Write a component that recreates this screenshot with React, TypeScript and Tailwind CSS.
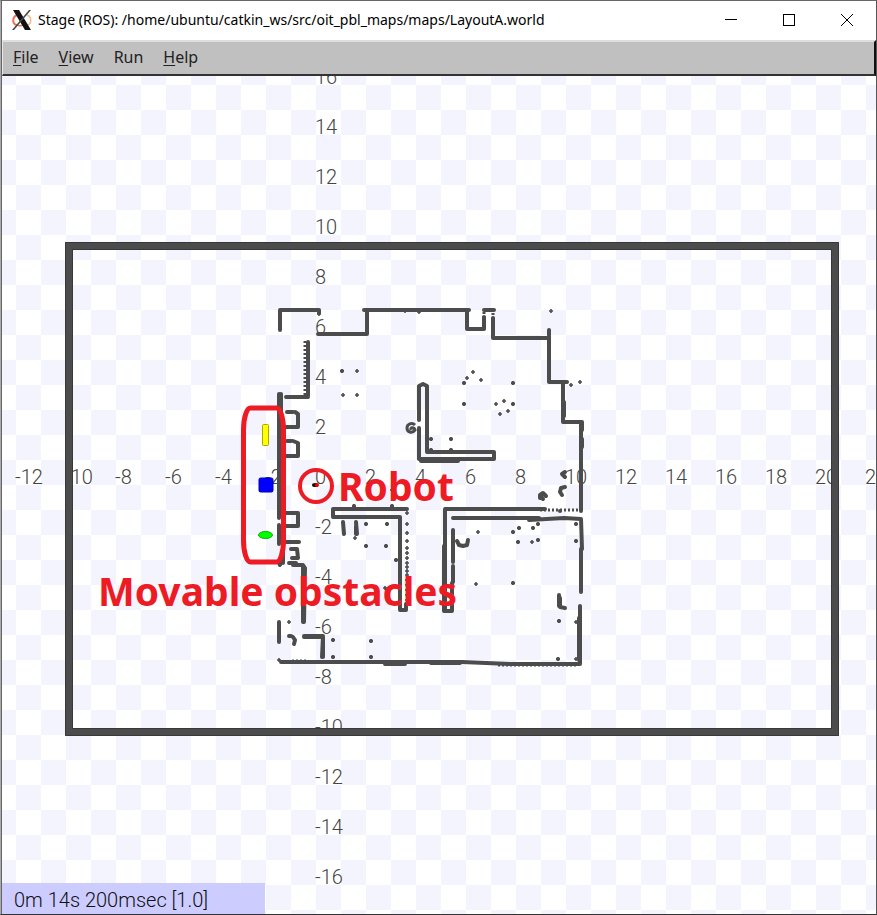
const WALL = '#4c4c4c';
const RED = '#ed1c24';

const xTicks = [-12, -10, -8, -6, -4, -2, 0, 2, 4, 6, 8, 10, 12, 14, 16, 18, 20, 22];
const yTicks = [16, 14, 12, 10, 8, 6, 4, 2, -2, -4, -6, -8, -10, -12, -14, -16];

const walls = [
  'M280 330V310H319V313',
  'M318 334H367V311',
  'M364 310H469',
  'M308 396V342M308 397H286',
  'M279 394V518M279 525V544',
  'M281 394V420',
  'M287 412H293M295 412L298 414V427H284',
  'M287 441H291M293 441L298 443V456H284',
  'M284 513H298V526H284',
  'M284 542H299',
  'M291 549L297 549L298 558H292',
  'M283 548V563M279 563L280 565',
  'M289 563H296M293 565H303L305 568L304 622M303 566V622',
  'M279 622V642',
  'M289 636L291 636M293 637L295 640L294 644',
  'M304 636H323L322 657M304 637H323V657',
  'M281 662H462L510 664H580V606',
  'M385 664H405M431 663H460',
  'M407 509H333V517H400V610H406V604',
  'M343 522L344 534M356 522L357 534M356 526V534',
  'M467 310V329H484V317',
  'M484 310H494',
  'M493 318V338H549',
  'M549 330V382H567',
  'M563 383V397M564 402V416M563 383V422H581V511',
  'M582 422V430M582 439V447',
  'M419 420V386L423 384L427 386V452H494V459H419V428',
  'M421 461H458',
  'M445 611V509H545',
  'M444 546V611H452V604',
  'M453 530V562M453 566V582M452 583V608',
  'M453 518H539M529 520L564 518L581 519L582 549',
  'M581 549V592',
  'M579 618V660',
  'M559 595V606M560 598L560 607L565 608',
  'M457 541L459 545L463 546L467 545L468 540',
  'M540 498L540 495L543 493L546 496M543 499L541 497',
  'M565 487L561 488L560 492L562 495',
  'M565 472L562 474L565 477',
];

const dottedWalls = [
  'M305 341V396',
  'M484 312V330',
  'M540 510H581',
  'M498 665H578',
  'M292 661H308',
  'M493 313V320',
];

const dots = [
  [319, 314], [342, 371], [357, 371], [343, 395], [357, 395],
  [289, 622], [333, 640], [371, 641], [333, 657], [371, 657], [279, 660],
  [407, 513], [407, 524], [407, 533], [407, 541], [407, 548], [407, 553],
  [407, 558], [407, 563], [407, 567], [407, 571], [407, 575], [407, 580],
  [407, 585], [407, 590], [407, 595], [407, 600],
  [354, 506], [392, 506], [392, 490], [355, 538], [366, 524], [387, 524],
  [366, 546], [386, 546], [396, 560], [385, 588], [551, 311],
  [571, 385], [580, 382], [464, 383], [464, 404], [513, 383], [513, 404],
  [473, 372], [467, 378], [481, 380], [496, 404], [504, 401], [508, 411],
  [500, 414], [431, 439], [451, 439], [431, 450], [451, 450],
  [478, 532], [476, 584], [519, 528], [533, 528], [513, 532], [518, 542],
  [532, 542], [538, 540], [538, 524], [576, 524], [576, 541], [513, 583],
  [559, 621], [576, 622], [558, 659], [576, 659], [405, 311], [419, 312],
];

const bigDots = [
  [464, 383], [464, 404], [513, 383], [513, 404], [431, 439], [451, 439],
  [431, 450], [451, 450], [396, 560], [366, 524], [387, 524], [366, 546],
  [386, 546], [538, 524], [354, 506], [392, 506], [519, 528], [533, 528],
  [513, 532], [518, 542], [538, 540], [576, 541], [371, 641], [333, 640],
  [371, 657], [333, 657], [289, 412], [289, 441], [576, 524], [513, 583],
  [560, 511], [559, 621], [558, 659], [342, 371],
];

function StageLogo() {
  return (
    <svg className="h-5 w-5 shrink-0" viewBox="0 0 20 20" aria-hidden="true">
      <path d="M5 5C0 7 0 14 5 15" fill="none" stroke="#e8735a" strokeWidth="2" />
      <path d="M15 5C20 7 20 14 15 15" fill="none" stroke="#f3bd8b" strokeWidth="1.5" />
      <path d="M5 15C8 17 11 15 14 14" fill="none" stroke="#e8735a" strokeWidth="1.5" />
      <path d="M1 0H7L19 20H13Z" fill="#111" />
      <path d="M17 0H19L2 20H0Z" fill="#444" />
    </svg>
  );
}

function TitleBar() {
  return (
    <header className="flex h-[39px] items-center bg-white pb-[2px] pl-[10px]">
      <StageLogo />
      <h1 className="ml-[6px] min-w-0 flex-1 truncate font-['Noto_Sans','Open_Sans',sans-serif] text-[14px] leading-5 text-black">
        Stage (ROS): /home/ubuntu/catkin_ws/src/oit_pbl_maps/maps/LayoutA.world
      </h1>
      <div className="flex h-full shrink-0">
        <button type="button" aria-label="Minimize" className="flex w-[58px] items-center justify-center">
          <svg className="h-3 w-3" viewBox="0 0 12 12"><path d="M0 5.5H12" stroke="#000" /></svg>
        </button>
        <button type="button" aria-label="Maximize" className="flex w-[58px] items-center justify-center">
          <svg className="h-3 w-3" viewBox="0 0 12 12"><rect x=".5" y=".5" width="11" height="11" fill="none" stroke="#000" /></svg>
        </button>
        <button type="button" aria-label="Close" className="flex w-[58px] items-center justify-center">
          <svg className="h-3 w-3" viewBox="0 0 12 12"><path d="M0 0L12 12M12 0L0 12" stroke="#000" /></svg>
        </button>
      </div>
    </header>
  );
}

function MenuBar() {
  return (
    <nav className="flex h-9 items-center gap-5 border-t-2 border-r-2 border-b-2 border-l border-t-[#dedede] border-r-[#111] border-b-[#333] border-l-[#e8e8e8] bg-[#c0c0c0] pb-[2px] pl-[10px] font-['Noto_Sans','Open_Sans',sans-serif] text-base leading-5 text-[#222]">
      <button type="button"><u className="underline-offset-2">F</u>ile</button>
      <button type="button"><u className="underline-offset-2">V</u>iew</button>
      <button type="button">Run</button>
      <button type="button"><u className="underline-offset-2">H</u>elp</button>
    </nav>
  );
}

function WorldMap() {
  return (
    <svg
      className="absolute inset-0 h-full w-full"
      viewBox="2 76 874 838"
      preserveAspectRatio="xMidYMid slice"
      role="img"
      aria-label="Simulated world"
    >
      <defs>
        <pattern id="floor" x="16" y="85" width="50" height="50" patternUnits="userSpaceOnUse">
          <rect width="50" height="50" fill="#fff" />
          <rect width="25" height="25" fill="#f4f4ff" />
          <rect x="25" y="25" width="25" height="25" fill="#f4f4ff" />
        </pattern>
      </defs>
      <rect x="2" y="76" width="874" height="838" fill="url(#floor)" />

      <g className="font-['Roboto','Liberation_Sans',sans-serif] font-light" fill="#444" fontSize="20">
        {xTicks.map((t) => (
          <text key={t} x={315 + t * 25} y="484">{t}</text>
        ))}
        {yTicks.map((t) => (
          <text key={t} x="315" y={484 - t * 25}>{t}</text>
        ))}
      </g>

      <rect x="69" y="246" width="766" height="486" fill="none" stroke={WALL} strokeWidth="8" />
      <rect x="65.5" y="242.5" width="773" height="493" rx="1" fill="none" stroke="#383838" />
      <rect x="72.5" y="249.5" width="759" height="479" fill="none" stroke="#383838" />

      <g fill="none" stroke={WALL} strokeWidth="4" strokeLinecap="round" strokeLinejoin="round">
        {walls.map((d) => <path key={d} d={d} />)}
      </g>
      <path d="M415 425C412 422 407 424 407 428C407 432 412 434 415 430C414 427 410 427 411 430" fill="none" stroke={WALL} strokeWidth="3" />
      <g fill="none" stroke={WALL} strokeWidth="3" strokeDasharray="2 2">
        {dottedWalls.map((d) => <path key={d} d={d} />)}
      </g>
      <g stroke={WALL} strokeWidth="1.6">
        {dots.map(([x, y], i) => <path key={i} d={`M${x - 2} ${y}h4M${x} ${y - 2}v4`} />)}
      </g>
      <g fill={WALL}>
        {bigDots.map(([x, y], i) => <circle key={i} cx={x} cy={y} r="2" />)}
      </g>

      <rect x="262.5" y="424.5" width="6" height="21" rx="1" fill="#ff0" stroke="#a8a800" />
      <rect x="259" y="478" width="14" height="14" rx="1.5" fill="#00f" stroke="#0000b0" />
      <ellipse cx="265.5" cy="535" rx="7" ry="3.5" fill="#0f0" stroke="#00b000" />
      <ellipse cx="315" cy="485" rx="3" ry="2" fill="#111" />
      <circle cx="317" cy="485" r="2" fill="#e00" />

      <g fill="none" stroke={RED} strokeWidth="5">
        <rect x="243.5" y="408" width="40" height="154" rx="7" ry="22" />
        <circle cx="316" cy="486" r="16" strokeWidth="4" />
      </g>
      <g className="font-['Noto_Sans','Open_Sans',sans-serif] font-bold" fill={RED} fontSize="39">
        <text x="338" y="501">Robot</text>
        <text x="98" y="606">Movable obstacles</text>
      </g>
    </svg>
  );
}

export default function App() {
  return (
    <div className="flex min-h-screen flex-col border-x border-y border-t-[#666] border-r-[#555] border-b-[#333] border-l-[#aaa] bg-white">
      <div className="flex flex-1 flex-col border-l border-l-[#666]">
        <TitleBar />
        <MenuBar />
        <main className="relative flex flex-1 flex-col justify-end overflow-hidden">
          <WorldMap />
          <p className="relative h-[31px] w-[263px] bg-[#ccccff] pl-3 font-['Roboto','Liberation_Sans',sans-serif] text-[20px] leading-[34px] font-light text-[#111]">
            0m 14s 200msec [1.0]
          </p>
        </main>
      </div>
    </div>
  );
}
